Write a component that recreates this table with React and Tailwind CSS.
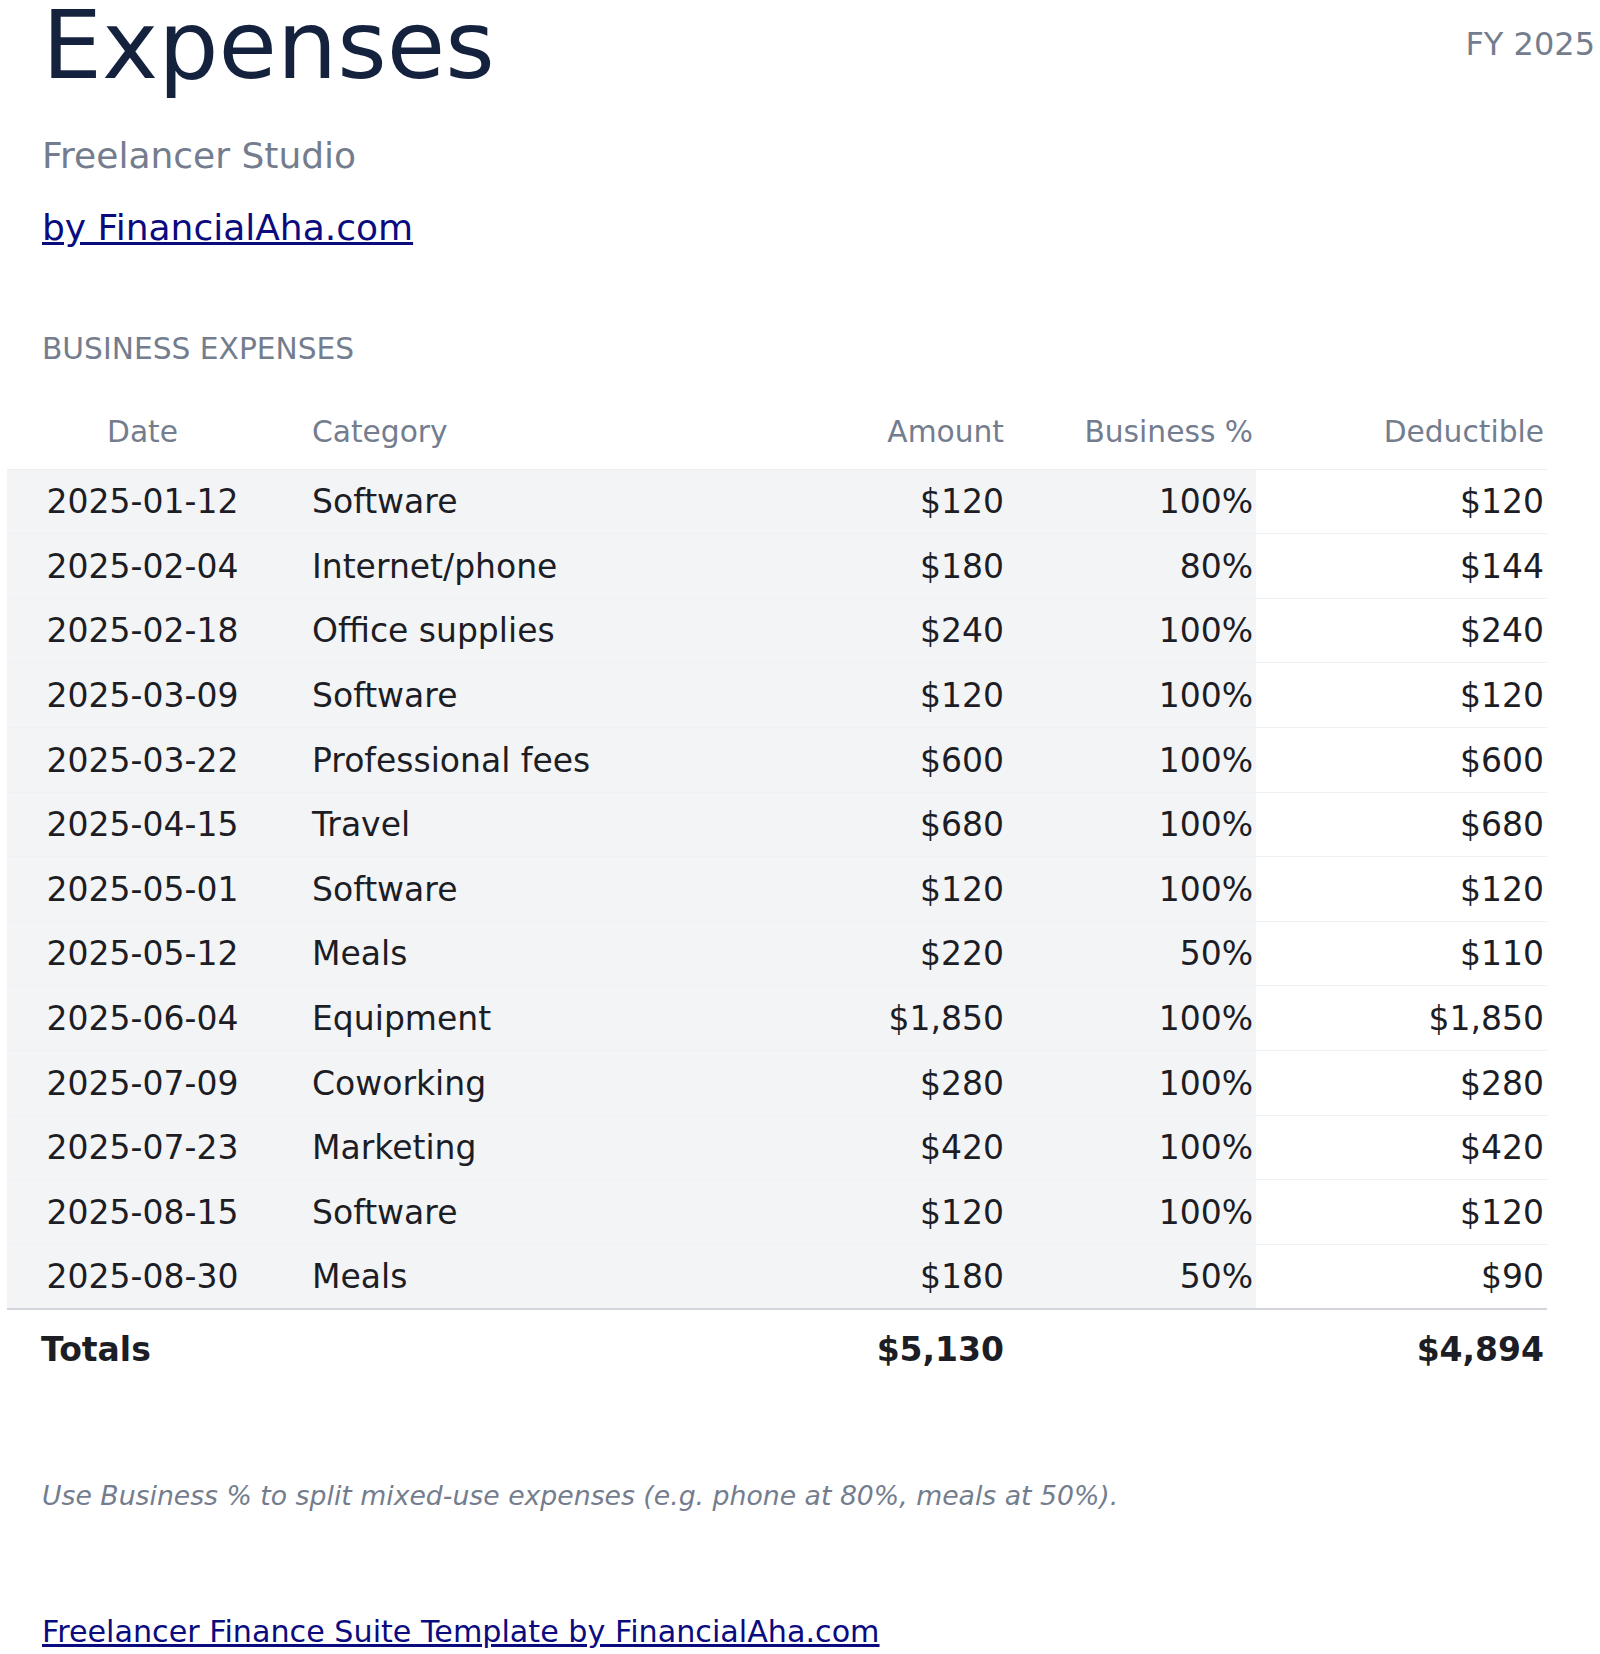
import React from 'react';

const rows = [
  ['2025-01-12', 'Software', '$120', '100%', '$120'],
  ['2025-02-04', 'Internet/phone', '$180', '80%', '$144'],
  ['2025-02-18', 'Office supplies', '$240', '100%', '$240'],
  ['2025-03-09', 'Software', '$120', '100%', '$120'],
  ['2025-03-22', 'Professional fees', '$600', '100%', '$600'],
  ['2025-04-15', 'Travel', '$680', '100%', '$680'],
  ['2025-05-01', 'Software', '$120', '100%', '$120'],
  ['2025-05-12', 'Meals', '$220', '50%', '$110'],
  ['2025-06-04', 'Equipment', '$1,850', '100%', '$1,850'],
  ['2025-07-09', 'Coworking', '$280', '100%', '$280'],
  ['2025-07-23', 'Marketing', '$420', '100%', '$420'],
  ['2025-08-15', 'Software', '$120', '100%', '$120'],
  ['2025-08-30', 'Meals', '$180', '50%', '$90'],
];

function ExpenseRow({ row, last }) {
  const [date, category, amount, pct, deductible] = row;
  const border = last ? 'border-b-2 border-[#d1d5db]' : 'border-b border-[#eef0f3]';
  const cell = `pt-[13.6px] pb-[11.6px] leading-[38.4px] ${border}`;

  return (
    <tr>
      <td className={`${cell} bg-[#f3f4f6] px-[34px] text-center`}>{date}</td>
      <td className={`${cell} bg-[#f3f4f6] pl-[34px] text-left`}>{category}</td>
      <td className={`${cell} bg-[#f3f4f6] pr-[3px] text-right`}>{amount}</td>
      <td className={`${cell} bg-[#f3f4f6] pr-[3px] text-right`}>{pct}</td>
      <td className={`${cell} bg-white pr-[3px] text-right`}>{deductible}</td>
    </tr>
  );
}

export default function App() {
  return (
    <div
      className="min-h-[1654px] bg-white pl-[42px] pr-[5px] text-[#1c1d25]"
      style={{ fontFamily: '"DejaVu Sans", Verdana, sans-serif' }}
    >
      {/* header */}
      <div className="flex items-start justify-between">
        <h1 className="text-[95px] leading-[91px] font-normal text-[#15223d]">Expenses</h1>
        <div className="mt-[25px] text-[32px] leading-[normal] text-[#747d8e]">FY 2025</div>
      </div>

      <p className="mt-[44px] text-[36px] leading-[normal] text-[#747d8e]">Freelancer Studio</p>
      <a href="#" className="mt-[31px] block w-fit text-[36px] leading-[normal] text-[#0b0b80] underline">
        by FinancialAha.com
      </a>

      <h2 className="mt-[82.6px] text-[29.7px] leading-[normal] font-normal text-[#747d8e]">BUSINESS EXPENSES</h2>

      {/* table */}
      <table className="mt-[36px] -ml-[35px] w-[1540px] table-fixed border-collapse text-[33px]">
        <colgroup>
          <col className="w-[271px]" />
          <col className="w-[430px]" />
          <col className="w-[299px]" />
          <col className="w-[249px]" />
          <col className="w-[291px]" />
        </colgroup>
        <thead>
          <tr className="text-[29.7px] leading-[normal] text-[#747d8e]">
            <th className="border-b border-[#eceef1] px-[34px] pt-[12px] pb-[20px] text-center font-normal">Date</th>
            <th className="border-b border-[#eceef1] pl-[34px] pt-[12px] pb-[20px] text-left font-normal">Category</th>
            <th className="border-b border-[#eceef1] pr-[3px] pt-[12px] pb-[20px] text-right font-normal">Amount</th>
            <th className="border-b border-[#eceef1] pr-[3px] pt-[12px] pb-[20px] text-right font-normal">Business %</th>
            <th className="border-b border-[#eceef1] pr-[3px] pt-[12px] pb-[20px] text-right font-normal">Deductible</th>
          </tr>
        </thead>
        <tbody>
          {rows.map((row, i) => (
            <ExpenseRow key={row[0]} row={row} last={i === rows.length - 1} />
          ))}
        </tbody>
        <tfoot>
          <tr className="font-bold leading-[38.4px]">
            <td colSpan={2} className="pl-[34px] pt-[21px] pb-[20px] text-left">Totals</td>
            <td className="pr-[3px] pt-[21px] pb-[20px] text-right">$5,130</td>
            <td className="pt-[21px] pb-[20px]"></td>
            <td className="pr-[3px] pt-[21px] pb-[20px] text-right">$4,894</td>
          </tr>
        </tfoot>
      </table>

      <p className="mt-[90px] text-[26.7px] leading-[normal] italic text-[#747d8e]">
        Use Business % to split mixed-use expenses (e.g. phone at 80%, meals at 50%).
      </p>

      <a href="#" className="mt-[103px] block w-fit text-[30.2px] leading-[normal] text-[#0b0b80] underline">
        Freelancer Finance Suite Template by FinancialAha.com
      </a>
    </div>
  );
}
